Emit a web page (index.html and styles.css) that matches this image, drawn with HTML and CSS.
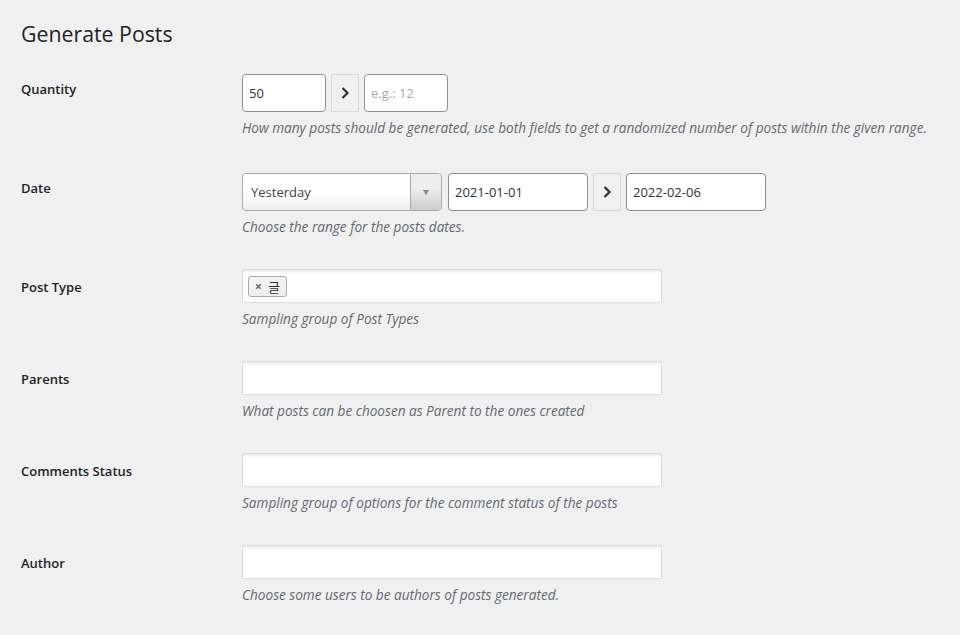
FILE: index.html
```html
<!DOCTYPE html>
<html>
<head>
<meta charset="utf-8">
<link rel="stylesheet" href="styles.css">
</head>
<body>
<div class="wrap">
  <h1 class="title">Generate Posts</h1>
  <div class="form">
    <div class="row row-qty">
      <div class="label">Quantity</div>
      <div class="field">
        <div class="line">
          <div class="input w84">50</div>
          <div class="sep"><svg width="10" height="14" viewBox="0 0 10 14"><path d="M2.5 2 L7.5 7 L2.5 12" fill="none" stroke="#2c3338" stroke-width="2.2"/></svg></div>
          <div class="input w84 ph">e.g.: 12</div>
        </div>
        <p class="desc">How many posts should be generated, use both fields to get a randomized number of posts within the given range.</p>
      </div>
    </div>
    <div class="row row-date">
      <div class="label">Date</div>
      <div class="field">
        <div class="line">
          <div class="select">
            <span class="select-text">Yesterday</span>
            <span class="select-arrow"><span class="tri"></span></span>
          </div>
          <div class="input w140">2021-01-01</div>
          <div class="sep"><svg width="10" height="14" viewBox="0 0 10 14"><path d="M2.5 2 L7.5 7 L2.5 12" fill="none" stroke="#2c3338" stroke-width="2.2"/></svg></div>
          <div class="input w140">2022-02-06</div>
        </div>
        <p class="desc">Choose the range for the posts dates.</p>
      </div>
    </div>
    <div class="row row-s2">
      <div class="label">Post Type</div>
      <div class="field">
        <div class="multi">
          <span class="tag"><span class="tag-x">×</span><span class="tag-t">글</span></span>
        </div>
        <p class="desc">Sampling group of Post Types</p>
      </div>
    </div>
    <div class="row row-s2">
      <div class="label">Parents</div>
      <div class="field">
        <div class="multi"></div>
        <p class="desc">What posts can be choosen as Parent to the ones created</p>
      </div>
    </div>
    <div class="row row-s2">
      <div class="label">Comments Status</div>
      <div class="field">
        <div class="multi"></div>
        <p class="desc">Sampling group of options for the comment status of the posts</p>
      </div>
    </div>
    <div class="row row-s2">
      <div class="label">Author</div>
      <div class="field">
        <div class="multi"></div>
        <p class="desc">Choose some users to be authors of posts generated.</p>
      </div>
    </div>
  </div>
</div>
</body>
</html>
```
FILE: styles.css
```css
html, body {
  margin: 0;
  padding: 0;
  background: #f0f0f1;
}
body {
  font-family: "Open Sans", "Noto Sans", sans-serif;
  color: #1d2327;
  font-size: 13px;
}
.wrap {
  padding: 0 0 0 21px;
}
.title {
  margin: 0;
  padding-top: 19px;
  font-size: 21.3px;
  font-weight: 400;
  line-height: 29px;
  color: #1d2327;
}
.form {
  padding-top: 12px;
}
.row {
  display: flex;
  height: 99px;
}
.row-s2 {
  height: 92px;
}
.label {
  width: 221px;
  flex: none;
  padding-top: 20px;
  font-size: 13px;
  font-weight: 600;
  line-height: 18px;
}
.field {
  padding-top: 14px;
}
.row-s2 .field {
  padding-top: 11px;
}
.line {
  display: flex;
  gap: 5px;
}
.input {
  box-sizing: border-box;
  height: 38px;
  border: 1px solid #8c8f94;
  border-radius: 4px;
  background: #fff;
  font-size: 13px;
  line-height: 36px;
  padding: 0 6px;
  color: #2c3338;
}
.w84 { width: 84px; }
.w140 { width: 140px; }
.ph { color: #a7aaad; }
.sep {
  box-sizing: border-box;
  width: 28px;
  height: 38px;
  border: 1px solid #dcdcde;
  background: #f0f0f1;
  display: flex;
  align-items: center;
  justify-content: center;
}
.select {
  box-sizing: border-box;
  width: 200px;
  height: 38px;
  border: 1px solid #aaa;
  border-radius: 4px;
  background: linear-gradient(to top, #eee 0%, #fff 50%);
  display: flex;
  margin-right: 1px;
  overflow: hidden;
}
.select-text {
  flex: 1;
  padding-left: 8px;
  line-height: 36px;
  font-size: 13px;
  color: #444;
}
.select-arrow {
  width: 30px;
  border-left: 1px solid #aaa;
  background: linear-gradient(to top, #ccc 0%, #eee 60%);
  display: flex;
  align-items: center;
  justify-content: center;
}
.tri {
  width: 0;
  height: 0;
  border-left: 3.5px solid transparent;
  border-right: 3.5px solid transparent;
  border-top: 5px solid #888;
}
.multi {
  box-sizing: border-box;
  width: 420px;
  height: 34px;
  border: 1px solid #dcdcde;
  background: #fff;
  box-shadow: inset 0 3px 3px -1px rgba(0,0,0,0.08);
  padding: 6px 5px 0;
}
.tag {
  box-sizing: border-box;
  display: inline-flex;
  align-items: center;
  height: 21px;
  border: 1px solid #aaa;
  border-radius: 3px;
  background: linear-gradient(to top, #eee, #f4f4f4);
  padding: 0 6px 0 6px;
  gap: 6px;
  vertical-align: top;
}
.tag-x {
  color: #666;
  font-weight: 700;
  font-size: 12px;
  line-height: 19px;
}
.tag-t {
  font-family: "Noto Sans CJK KR", sans-serif;
  font-size: 13px;
  line-height: 19px;
  color: #333;
}
.desc {
  margin: 0;
  padding-top: 6px;
  font-style: italic;
  font-size: 13.6px;
  line-height: 20px;
  color: #646970;
}
```
